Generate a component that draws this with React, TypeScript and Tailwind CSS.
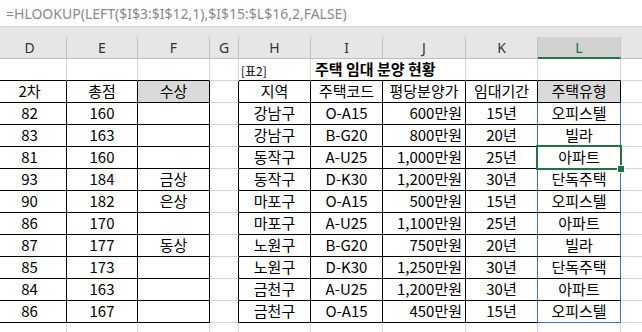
import type { ReactNode } from 'react'

const W = ['w-[74px]', 'w-[71px]', 'w-[72px]', 'w-[29px]', 'w-[72px]', 'w-[72px]', 'w-[83px]', 'w-[72px]', 'w-[83px]', 'w-[40px]']
const LETTERS = ['D', 'E', 'F', 'G', 'H', 'I', 'J', 'K', 'L', '']

const GR = 'border-r-[#d4d4d4]'
const GB = 'border-b-[#d4d4d4]'
const BR = 'border-r-black'
const BB = 'border-b-black'
const UR = 'border-r-[#3b72d0]'
const UB = 'border-b-[#3b72d0]'

const left = [
  ['82', '160', ''],
  ['83', '163', ''],
  ['81', '160', ''],
  ['93', '184', '금상'],
  ['90', '182', '은상'],
  ['86', '170', ''],
  ['87', '177', '동상'],
  ['85', '173', ''],
  ['84', '163', ''],
  ['86', '167', ''],
]

const right = [
  ['강남구', 'O-A15', '600만원', '15년', '오피스텔'],
  ['강남구', 'B-G20', '800만원', '20년', '빌라'],
  ['동작구', 'A-U25', '1,000만원', '25년', '아파트'],
  ['동작구', 'D-K30', '1,200만원', '30년', '단독주택'],
  ['마포구', 'O-A15', '500만원', '15년', '오피스텔'],
  ['마포구', 'A-U25', '1,100만원', '25년', '아파트'],
  ['노원구', 'B-G20', '750만원', '20년', '빌라'],
  ['노원구', 'D-K30', '1,250만원', '30년', '단독주택'],
  ['금천구', 'A-U25', '1,200만원', '30년', '아파트'],
  ['금천구', 'O-A15', '450만원', '15년', '오피스텔'],
]

function Cell({ w, r, b, className = '', children }: { w: string; r: string; b: string; className?: string; children?: ReactNode }) {
  return (
    <div className={`relative h-[22px] shrink-0 box-border border-r border-b flex items-center ${w} ${r} ${b} ${className}`}>
      {children}
    </div>
  )
}

function Selection() {
  return (
    <div className="absolute -left-[2px] -top-[2px] w-[86px] h-[25px] border-2 border-[#217346] z-10">
      <div className="absolute -right-[4px] -bottom-[4px] w-[6px] h-[6px] bg-[#217346] outline outline-1 outline-white" />
    </div>
  )
}

export default function App() {
  return (
    <div className="w-[642px] h-[332px] overflow-hidden bg-white text-black" style={{ fontFamily: '"Noto Sans CJK KR", sans-serif' }}>
      {/* formula bar */}
      <div className="h-[27px] border-b border-[#d5d5d5] flex items-center pl-[6px] text-[14px] text-[#8a8a8a]" style={{ fontFamily: '"Noto Sans", sans-serif' }}>
        =HLOOKUP(LEFT($I$3:$I$12,1),$I$15:$L$16,2,FALSE)
      </div>
      <div className="h-[10px] bg-[#e6e6e6]" />

      <div className="-ml-[7px] flex flex-col">
        {/* column headers */}
        <div className="flex bg-[#e6e6e6]" style={{ fontFamily: '"Noto Sans", sans-serif' }}>
          {LETTERS.map((l, i) =>
            l === 'L' ? (
              <div key={i} className={`h-[22px] shrink-0 box-border border-r border-r-[#c4c4c4] border-b-2 border-b-[#217346] bg-[#d2d2d2] flex items-center justify-center text-[14px] text-[#1e6b3f] ${W[i]}`}>{l}</div>
            ) : (
              <div key={i} className={`h-[22px] shrink-0 box-border border-r border-r-[#c4c4c4] border-b border-b-[#bdbdbd] flex items-center justify-center text-[14px] text-[#333] ${W[i]}`}>{l}</div>
            )
          )}
        </div>

        {/* row 1: title */}
        <div className="flex text-[15px]">
          <Cell w={W[0]} r={GR} b={BB} />
          <Cell w={W[1]} r={GR} b={BB} />
          <Cell w={W[2]} r={GR} b={BB} />
          <Cell w={W[3]} r={GR} b={GB} />
          <Cell w={W[4]} r={GR} b={BB} className="pl-[2px] pt-[3px] text-[12px]">[표2]</Cell>
          <Cell w="w-[155px]" r={GR} b={BB} className="pl-[4px] font-bold">주택 임대 분양 현황</Cell>
          <Cell w={W[7]} r={GR} b={BB} />
          <Cell w={W[8]} r={GR} b={BB} />
          <Cell w={W[9]} r={GR} b={GB} />
        </div>

        {/* row 2: headers */}
        <div className="flex text-[15px]">
          <Cell w={W[0]} r={BR} b={BB} className="justify-center">2차</Cell>
          <Cell w={W[1]} r={BR} b={BB} className="justify-center">총점</Cell>
          <Cell w={W[2]} r={BR} b={BB} className="justify-center bg-[#d9d9d9]">수상</Cell>
          <Cell w={W[3]} r={BR} b={GB} />
          <Cell w={W[4]} r={BR} b={BB} className="justify-center">지역</Cell>
          <Cell w={W[5]} r={BR} b={BB} className="justify-center">주택코드</Cell>
          <Cell w={W[6]} r={BR} b={BB} className="justify-center">평당분양가</Cell>
          <Cell w={W[7]} r={BR} b={BB} className="justify-center">임대기간</Cell>
          <Cell w={W[8]} r={BR} b={BB} className="justify-center bg-[#d9d9d9]">주택유형</Cell>
          <Cell w={W[9]} r={GR} b={GB} />
        </div>

        {left.map((l, i) => {
          const rr = right[i]
          const last = i === left.length - 1
          return (
            <div key={i} className="flex text-[15px]">
              <Cell w={W[0]} r={BR} b={BB} className="justify-center">{l[0]}</Cell>
              <Cell w={W[1]} r={BR} b={BB} className="justify-center">{l[1]}</Cell>
              <Cell w={W[2]} r={BR} b={BB} className="justify-center">{l[2]}</Cell>
              <Cell w={W[3]} r={BR} b={GB} />
              <Cell w={W[4]} r={BR} b={BB} className="justify-center">{rr[0]}</Cell>
              <Cell w={W[5]} r={BR} b={BB} className="justify-center">{rr[1]}</Cell>
              <Cell w={W[6]} r={BR} b={BB} className="justify-end pr-[3px]">{rr[2]}</Cell>
              <Cell w={W[7]} r={UR} b={BB} className="justify-center">{rr[3]}</Cell>
              <Cell w={W[8]} r={UR} b={last ? UB : BB} className="justify-center">
                {rr[4]}
                {i === 2 && <Selection />}
              </Cell>
              <Cell w={W[9]} r={GR} b={GB} />
            </div>
          )
        })}

        {/* row 13 */}
        <div className="flex">
          {W.map((w, i) => (
            <Cell key={i} w={w} r={GR} b={GB} />
          ))}
        </div>
      </div>
    </div>
  )
}
